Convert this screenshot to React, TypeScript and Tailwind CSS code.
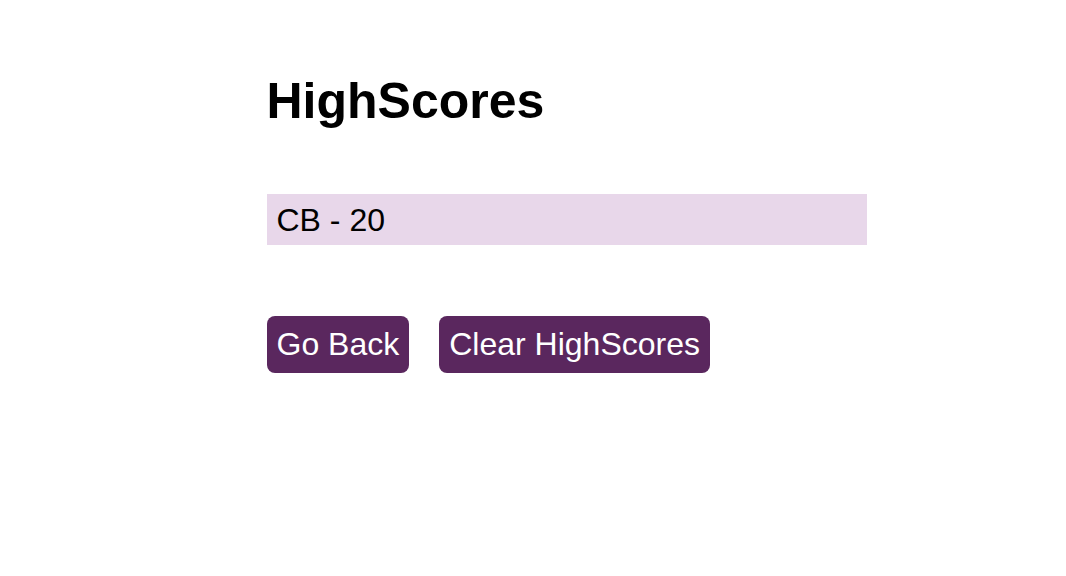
import React from 'react';

const scores = [{ initials: 'CB', score: 20 }];

const App: React.FC = () => {
  return (
    <div className="min-h-screen bg-white text-black font-['Liberation_Sans',Arial,sans-serif]">
      <div className="ml-[25%] w-[600px] pt-[72px]">
        <h1 className="text-[50px] leading-[58px] font-bold">HighScores</h1>

        <ol className="mt-[64px]">
          {scores.map((s) => (
            <li key={s.initials} className="bg-[#e8d7ea] px-[10px] pt-[8px] pb-[6px] text-[32px] leading-[37px]">
              {s.initials} - {s.score}
            </li>
          ))}
        </ol>

        <div className="mt-[71px] flex gap-[30px]">
          <button className="bg-[#5a275e] text-white text-[32px] leading-[37px] px-[10px] py-[10px] rounded-[8px]">
            Go Back
          </button>
          <button className="bg-[#5a275e] text-white text-[32px] leading-[37px] px-[10px] py-[10px] rounded-[8px]">
            Clear HighScores
          </button>
        </div>
      </div>
    </div>
  );
};

export default App;
